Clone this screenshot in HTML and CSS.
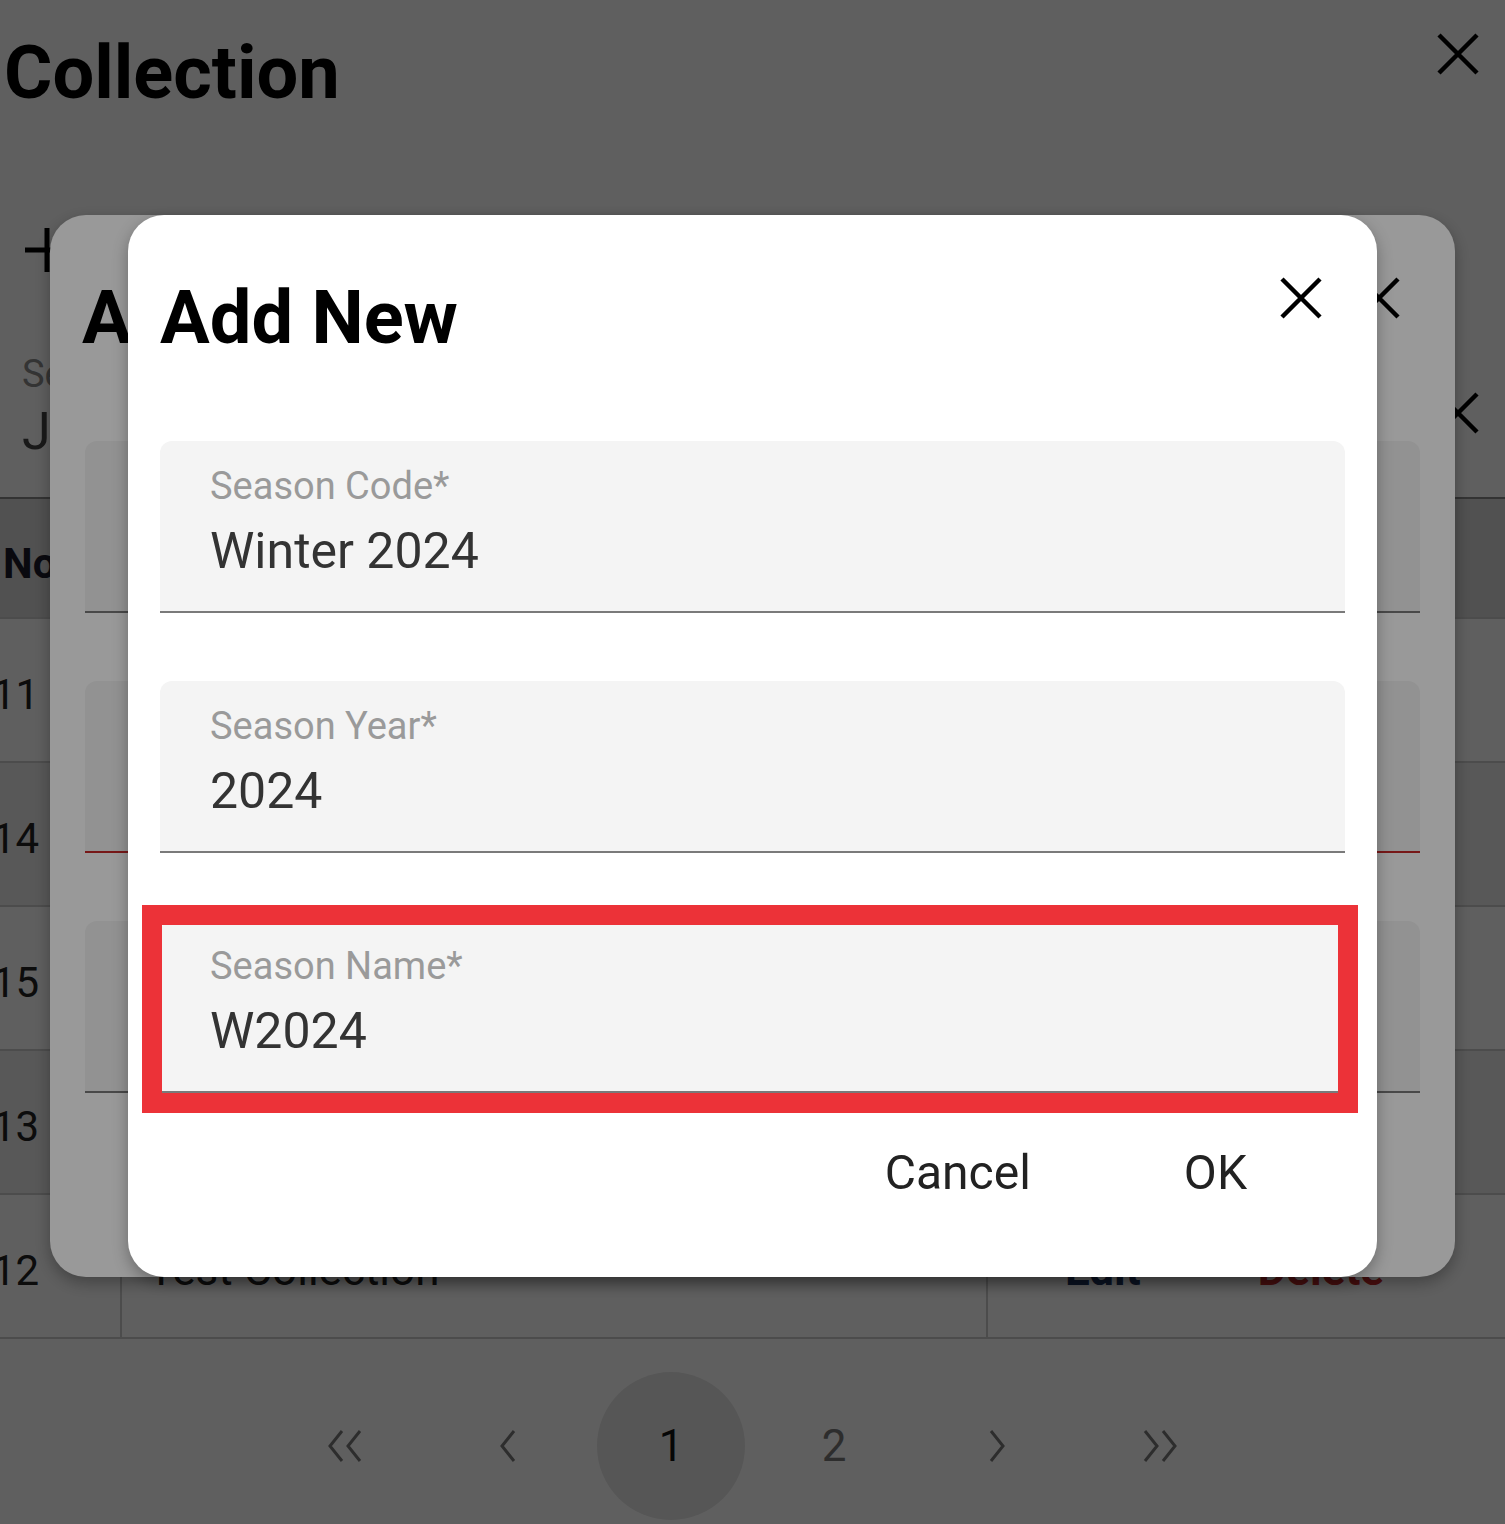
FILE: index.html
```html
<!DOCTYPE html>
<html lang="en">

<head>
    <meta charset="UTF-8">
    <meta name="viewport" content="width=device-width, initial-scale=1.0">
    <title>Collection</title>
    <link rel="stylesheet" href="styles.css">
</head>

<body>
    <div class="page">
        <div class="page-head">
            <h1 class="page-title">Collection</h1>
            <button class="icon-btn page-close">
                <svg width="44" height="44" viewBox="0 0 44 44"><path d="M3 3L41 41M41 3L3 41" stroke="currentColor" stroke-width="4.5" fill="none"/></svg>
            </button>
        </div>

        <div class="toolbar">
            <button class="icon-btn">
                <svg width="44" height="44" viewBox="0 0 44 44"><path d="M22 0V44M0 22H44" stroke="currentColor" stroke-width="5" fill="none"/></svg>
            </button>
        </div>

        <div class="filter">
            <div class="filter-label">Season</div>
            <div class="filter-value">January 2024</div>
            <button class="icon-btn filter-clear">
                <svg width="44" height="44" viewBox="0 0 44 44"><path d="M3 3L41 41M41 3L3 41" stroke="currentColor" stroke-width="4.5" fill="none"/></svg>
            </button>
        </div>

        <div class="grid">
            <div class="grid-row grid-head">
                <div class="cell">No</div>
                <div class="cell cell-name">Name</div>
                <div class="cell cell-action">Action</div>
            </div>
            <div class="grid-body">
                <div class="grid-row">
                    <div class="cell cell-no"><span>11</span></div>
                    <div class="cell cell-name">Spring Collection</div>
                    <div class="cell cell-action"><a class="link-edit">Edit</a><a class="link-delete">Delete</a></div>
                </div>
                <div class="grid-row">
                    <div class="cell cell-no"><span>14</span></div>
                    <div class="cell cell-name">Summer Collection</div>
                    <div class="cell cell-action"><a class="link-edit">Edit</a><a class="link-delete">Delete</a></div>
                </div>
                <div class="grid-row">
                    <div class="cell cell-no"><span>15</span></div>
                    <div class="cell cell-name">Autumn Collection</div>
                    <div class="cell cell-action"><a class="link-edit">Edit</a><a class="link-delete">Delete</a></div>
                </div>
                <div class="grid-row">
                    <div class="cell cell-no"><span>13</span></div>
                    <div class="cell cell-name">Holiday Collection</div>
                    <div class="cell cell-action"><a class="link-edit">Edit</a><a class="link-delete">Delete</a></div>
                </div>
                <div class="grid-row">
                    <div class="cell cell-no"><span>12</span></div>
                    <div class="cell cell-name">Test Collection</div>
                    <div class="cell cell-action"><a class="link-edit">Edit</a><a class="link-delete">Delete</a></div>
                </div>
            </div>
        </div>

        <div class="pager">
            <div class="pager-item">
                <svg width="40" height="34" viewBox="0 0 40 34"><path d="M17 2L5 17L17 32M35 2L23 17L35 32" stroke="currentColor" stroke-width="3" fill="none"/></svg>
            </div>
            <div class="pager-item">
                <svg width="18" height="34" viewBox="0 0 18 34"><path d="M15 2L3 17L15 32" stroke="currentColor" stroke-width="3" fill="none"/></svg>
            </div>
            <div class="pager-item current"><span>1</span></div>
            <div class="pager-item"><span>2</span></div>
            <div class="pager-item">
                <svg width="18" height="34" viewBox="0 0 18 34"><path d="M3 2L15 17L3 32" stroke="currentColor" stroke-width="3" fill="none"/></svg>
            </div>
            <div class="pager-item">
                <svg width="40" height="34" viewBox="0 0 40 34"><path d="M5 2L17 17L5 32M23 2L35 17L23 32" stroke="currentColor" stroke-width="3" fill="none"/></svg>
            </div>
        </div>
    </div>

    <div class="backdrop backdrop-first"></div>

    <div class="dialog dialog-back">
        <h2 class="dialog-title">Add New</h2>
        <button class="icon-btn dialog-close">
            <svg width="44" height="44" viewBox="0 0 44 44"><path d="M3 3L41 41M41 3L3 41" stroke="currentColor" stroke-width="4.5" fill="none"/></svg>
        </button>
        <div class="fields">
            <div class="field"></div>
            <div class="field field-error"></div>
            <div class="field"></div>
        </div>
    </div>

    <div class="backdrop backdrop-second"></div>

    <div class="dialog dialog-front">
        <h2 class="dialog-title">Add New</h2>
        <button class="icon-btn dialog-close">
            <svg width="44" height="44" viewBox="0 0 44 44"><path d="M3 3L41 41M41 3L3 41" stroke="currentColor" stroke-width="4.5" fill="none"/></svg>
        </button>
        <div class="fields">
            <div class="field">
                <div class="field-label">Season Code*</div>
                <div class="field-value">Winter 2024</div>
            </div>
            <div class="field">
                <div class="field-label">Season Year*</div>
                <div class="field-value">2024</div>
            </div>
            <div class="field">
                <div class="field-label">Season Name*</div>
                <div class="field-value">W2024</div>
                <span class="mark"></span>
            </div>
        </div>
        <div class="actions">
            <button class="text-btn">Cancel</button>
            <button class="text-btn">OK</button>
        </div>
    </div>
</body>

</html>
```

FILE: styles.css
```css
* {
    box-sizing: border-box;
}

body {
    margin: 0;
    font-family: Roboto, "Liberation Sans", Arial, sans-serif;
    background: #fff;
    color: #222;
    overflow: hidden;
}

.page {
    width: 1505px;
    height: 1524px;
}

.icon-btn {
    border: 0;
    background: none;
    padding: 0;
    color: #000;
    display: block;
}

.icon-btn svg {
    display: block;
}

/* page header */
.page-head {
    height: 205px;
    padding: 29px 0 0 4px;
    display: flex;
    justify-content: space-between;
    align-items: flex-start;
}

.page-title {
    margin: 0;
    font-size: 74px;
    font-weight: 700;
    line-height: 87px;
    color: #000;
}

.page-close {
    margin: 3px 25px 0 0;
}

.toolbar {
    height: 90px;
    padding: 23px 0 0 25px;
}

.filter {
    position: relative;
    height: 204px;
    padding: 57px 0 0 22px;
    border-bottom: 2px solid #8a8a8a;
}

.filter-label {
    font-size: 38px;
    line-height: 44px;
    color: #8c8c8c;
}

.filter-value {
    margin-top: 6px;
    font-size: 52px;
    line-height: 60px;
    color: #444;
}

.filter-clear {
    position: absolute;
    top: 96px;
    right: 25px;
}

/* table */
.grid-row {
    display: grid;
    grid-template-columns: 122px 866px 1fr;
    height: 144px;
    border-bottom: 2px solid #cdcdcd;
    font-size: 42px;
    color: #222;
}

.grid-head {
    height: 120px;
    background: #d8d8d8;
    font-weight: 700;
    color: #1a1a2a;
}

.grid-head .cell {
    padding-left: 3px;
    padding-top: 10px;
}

.grid-body .grid-row:nth-child(even) {
    background: #ececec;
}

.cell {
    display: flex;
    align-items: center;
}

.grid-body .cell {
    padding-top: 8px;
}

.cell-no {
    border-right: 2px solid #cdcdcd;
}

.cell-no span {
    margin-left: -8px;
}

.cell-name {
    padding-left: 26px;
    font-size: 44px;
    border-right: 2px solid #cdcdcd;
}

.grid-head .cell-name {
    padding-left: 26px;
}

.cell-action {
    padding-left: 77px;
    gap: 117px;
    font-size: 44px;
    font-weight: 700;
}

.link-edit {
    color: #1d3461;
}

.link-delete {
    color: #c62828;
}

/* pagination */
.pager {
    display: flex;
    justify-content: center;
    padding-top: 33px;
}

.pager-item {
    width: 163px;
    height: 148px;
    display: flex;
    align-items: center;
    justify-content: center;
    font-size: 44px;
    color: #7a7a7a;
}

.pager-item span {
    width: 148px;
    height: 148px;
    border-radius: 50%;
    display: flex;
    align-items: center;
    justify-content: center;
}

.pager-item.current span {
    background: #e6e6e6;
    color: #111;
}

/* modal layers */
.backdrop {
    position: fixed;
    top: 0;
    left: 0;
    right: 0;
    bottom: 0;
}

.backdrop-first {
    background: rgba(0, 0, 0, 0.385);
    z-index: 10;
}

.backdrop-second {
    background: rgba(0, 0, 0, 0.4);
    z-index: 12;
}

.dialog {
    position: fixed;
    top: 215px;
    height: 1062px;
    background: #fff;
    border-radius: 36px;
    padding: 59px 32px 0;
    box-shadow: 0 6px 16px rgba(0, 0, 0, 0.3);
}

.dialog-back {
    left: 50px;
    width: 1405px;
    z-index: 11;
}

.dialog-back .field {
    margin: 0 3px;
}

.dialog-front {
    left: 128px;
    width: 1249px;
    z-index: 13;
}

.dialog-title {
    margin: 0;
    font-size: 74px;
    font-weight: 700;
    line-height: 87px;
    color: #000;
}

.dialog-close {
    position: absolute;
    top: 61px;
    right: 54px;
}

.fields {
    margin-top: 80px;
    display: flex;
    flex-direction: column;
    gap: 68px;
}

.field {
    position: relative;
    height: 172px;
    background: #f4f4f4;
    border-radius: 12px 12px 0 0;
    border-bottom: 2px solid #7a7a7a;
    padding: 23px 0 0 50px;
}

.field-error {
    border-bottom-color: #c62828;
}

.field-label {
    font-size: 38px;
    line-height: 44px;
    color: #9a9a9a;
}

.field-value {
    margin-top: 14px;
    font-size: 50px;
    line-height: 58px;
    color: #333;
}

.mark {
    position: absolute;
    top: -16px;
    left: -18px;
    right: -13px;
    bottom: -22px;
    border: 20px solid #ec3238;
}

.actions {
    margin-top: 52px;
    padding-right: 98px;
    display: flex;
    justify-content: flex-end;
    gap: 153px;
}

.text-btn {
    border: 0;
    background: none;
    padding: 0;
    font-family: inherit;
    font-size: 48px;
    line-height: 56px;
    color: #222;
}
```
